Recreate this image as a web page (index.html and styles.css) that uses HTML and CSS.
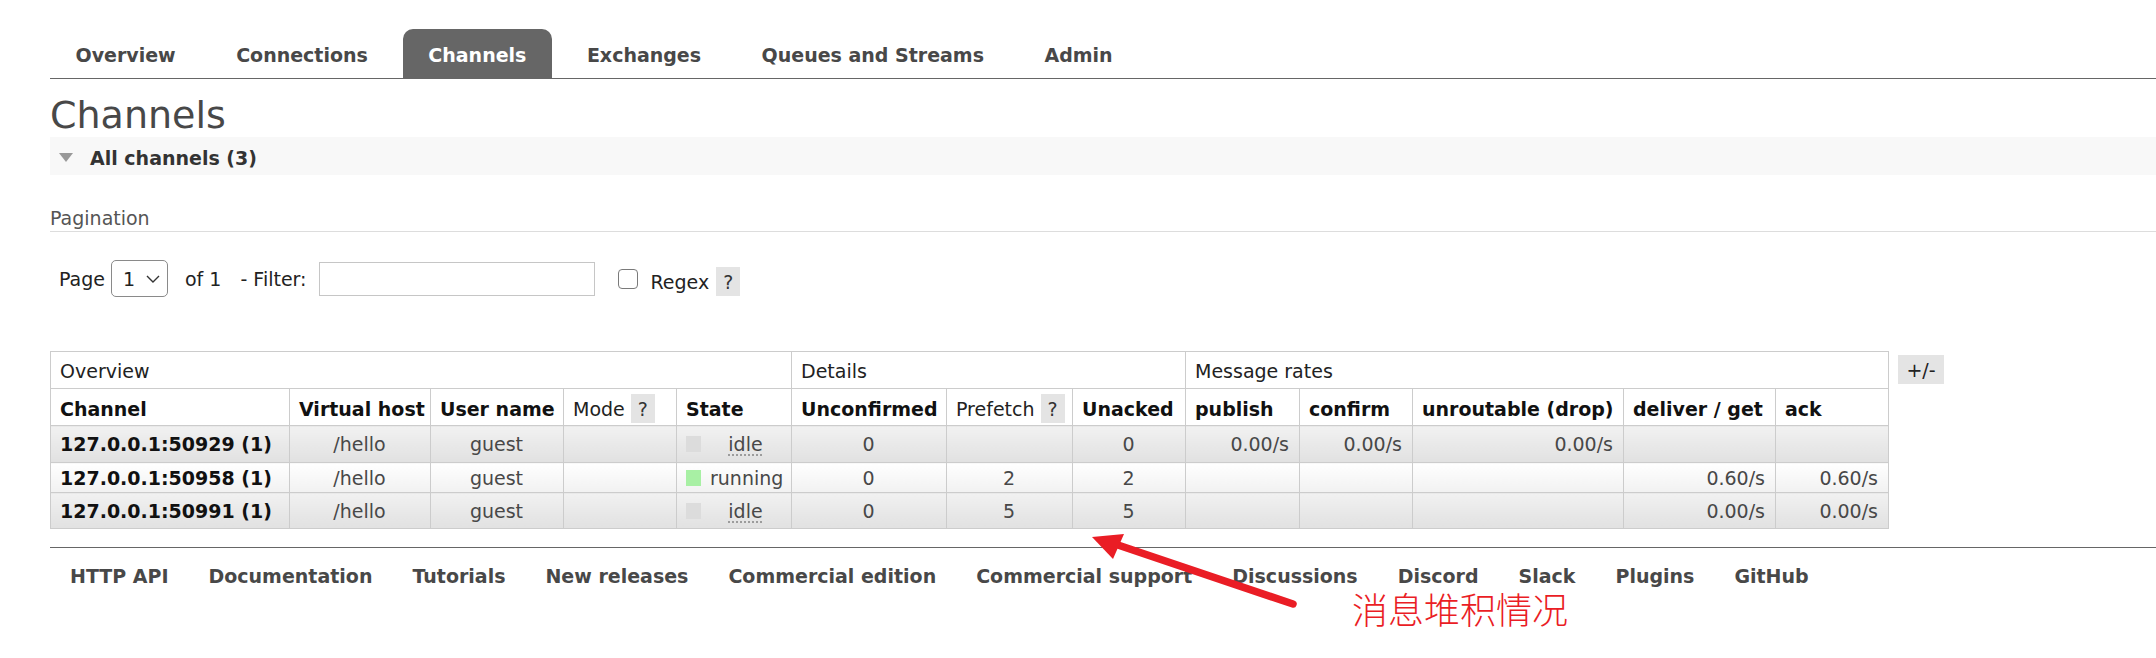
FILE: index.html
```html
<!DOCTYPE html>
<html lang="en">
<head>
<meta charset="utf-8">
<title>Channels</title>
<link rel="stylesheet" href="styles.css">
</head>
<body>
<div class="page">
  <ul class="tabs">
    <li><a href="#">Overview</a></li>
    <li><a href="#">Connections</a></li>
    <li class="active"><a href="#">Channels</a></li>
    <li><a href="#">Exchanges</a></li>
    <li><a href="#">Queues and Streams</a></li>
    <li><a href="#">Admin</a></li>
  </ul>

  <main class="main">
    <h1 class="title">Channels</h1>
    <div class="section-head"><span class="tri"></span><span>All channels (3)</span></div>

    <h3 class="pag-title">Pagination</h3>
    <div class="filter-row">
      <span>Page</span>
      <span class="select"><span class="select-val">1</span><svg class="chev" width="14" height="8" viewBox="0 0 14 8"><polyline points="1,1 7,7 13,1" fill="none" stroke="#333" stroke-width="1.4"/></svg></span>
      <span class="of">of 1</span>
      <span class="flabel">- Filter:</span>
      <span class="input"></span>
      <span class="check"></span>
      <span class="regex">Regex</span>
      <span class="help help-low">?</span>
    </div>

    <div class="table-wrap">
      <table class="list">
        <colgroup>
          <col class="w239"><col class="w141"><col class="w133"><col class="w113"><col class="w115">
          <col class="w155"><col class="w126"><col class="w113">
          <col class="w114"><col class="w113"><col class="w211"><col class="w152"><col class="w113">
        </colgroup>
        <thead>
          <tr class="group">
            <th colspan="5">Overview</th>
            <th colspan="3">Details</th>
            <th colspan="5">Message rates</th>
          </tr>
          <tr class="heads">
            <th class="b">Channel</th>
            <th class="b">Virtual host</th>
            <th class="b">User name</th>
            <th><span class="hwrap">Mode <span class="help">?</span></span></th>
            <th class="b">State</th>
            <th class="b">Unconfirmed</th>
            <th><span class="hwrap">Prefetch <span class="help">?</span></span></th>
            <th class="b">Unacked</th>
            <th class="b">publish</th>
            <th class="b">confirm</th>
            <th class="b">unroutable (drop)</th>
            <th class="b">deliver / get</th>
            <th class="b">ack</th>
          </tr>
        </thead>
        <tbody>
          <tr class="alt1 r37">
            <td class="name">127.0.0.1:50929 (1)</td>
            <td class="c">/hello</td>
            <td class="c">guest</td>
            <td></td>
            <td><span class="state"><span class="sq grey"></span><abbr class="st">idle</abbr></span></td>
            <td class="c">0</td>
            <td class="c"></td>
            <td class="c">0</td>
            <td class="r">0.00/s</td>
            <td class="r">0.00/s</td>
            <td class="r">0.00/s</td>
            <td class="r"></td>
            <td class="r"></td>
          </tr>
          <tr class="alt2 r30">
            <td class="name">127.0.0.1:50958 (1)</td>
            <td class="c">/hello</td>
            <td class="c">guest</td>
            <td></td>
            <td><span class="state"><span class="sq green"></span><span class="st">running</span></span></td>
            <td class="c">0</td>
            <td class="c">2</td>
            <td class="c">2</td>
            <td class="r"></td>
            <td class="r"></td>
            <td class="r"></td>
            <td class="r">0.60/s</td>
            <td class="r">0.60/s</td>
          </tr>
          <tr class="alt1 r36">
            <td class="name">127.0.0.1:50991 (1)</td>
            <td class="c">/hello</td>
            <td class="c">guest</td>
            <td></td>
            <td><span class="state"><span class="sq grey"></span><abbr class="st">idle</abbr></span></td>
            <td class="c">0</td>
            <td class="c">5</td>
            <td class="c">5</td>
            <td class="r"></td>
            <td class="r"></td>
            <td class="r"></td>
            <td class="r">0.00/s</td>
            <td class="r">0.00/s</td>
          </tr>
        </tbody>
      </table>
      <span class="help plusminus">+/-</span>
    </div>
  </main>

  <footer class="footer">
    <ul class="foot-links">
      <li><a href="#">HTTP API</a></li>
      <li><a href="#">Documentation</a></li>
      <li><a href="#">Tutorials</a></li>
      <li><a href="#">New releases</a></li>
      <li><a href="#">Commercial edition</a></li>
      <li><a href="#">Commercial support</a></li>
      <li><a href="#">Discussions</a></li>
      <li><a href="#">Discord</a></li>
      <li><a href="#">Slack</a></li>
      <li><a href="#">Plugins</a></li>
      <li><a href="#">GitHub</a></li>
    </ul>
  </footer>
</div>

<svg class="arrow" width="2156" height="658" viewBox="0 0 2156 658">
  <line x1="1293" y1="604" x2="1112" y2="543" stroke="#ea1d25" stroke-width="7.5" stroke-linecap="round"/>
  <polygon points="1092,537 1124,534 1113,559" fill="#ea1d25"/>
</svg>
<div class="note">消息堆积情况</div>
</body>
</html>
```

FILE: styles.css
```css
* { box-sizing: border-box; }
html, body { margin: 0; padding: 0; background: #fff; }
body {
  font-family: "DejaVu Sans", Verdana, sans-serif;
  font-size: 19px;
  color: #484848;
  position: relative;
  min-height: 658px;
  overflow: hidden;
}
.page { padding: 29px 0 0 50px; }

/* tabs */
.tabs {
  display: flex;
  list-style: none;
  margin: 0;
  padding: 0;
  border-bottom: 1px solid #666;
}
.tabs li { margin-right: 9.5px; }
.tabs a {
  display: block;
  height: 49px;
  padding: 4px 25.5px 0;
  line-height: 45px;
  font-weight: bold;
  color: #484848;
  text-decoration: none;
  border-radius: 10px 10px 0 0;
}
.tabs li.active a { background: #666; color: #fff; }

/* title */
.title {
  margin: 14px 0 0;
  font-size: 38px;
  font-weight: normal;
  line-height: 44px;
  color: #484848;
}

.section-head {
  display: flex;
  align-items: center;
  height: 38px;
  padding: 4px 0 0 9px;
  line-height: 30px;
  background: #f8f8f8;
  font-weight: bold;
  color: #333;
}
.tri {
  width: 0; height: 0;
  border-left: 7px solid transparent;
  border-right: 7px solid transparent;
  border-top: 9px solid #999;
  margin: -1px 17px 0 0;
}

.pag-title {
  margin: 32px 0 0;
  font-size: 19px;
  font-weight: normal;
  line-height: 22px;
  padding-bottom: 2px;
  border-bottom: 1px solid #ddd;
  color: #555;
}

.filter-row {
  display: flex;
  align-items: center;
  height: 37px;
  margin-top: 28px;
  padding-left: 9px;
  color: #222;
}
.select {
  display: flex;
  align-items: center;
  justify-content: space-between;
  width: 57px;
  height: 37px;
  margin-left: 6px;
  padding: 0 7px 0 11px;
  border: 1px solid #8a8a8a;
  border-radius: 5px;
}
.chev { display: block; }
.of { margin-left: 17px; }
.flabel { margin-left: 19px; }
.input {
  width: 276px;
  height: 34px;
  margin-left: 13px;
  border: 1px solid #c6c6c6;
}
.check {
  width: 20px;
  height: 20px;
  margin-left: 23px;
  border: 1.5px solid #7a7a7a;
  border-radius: 4px;
}
.regex { margin: 6px 0 0 12px; }
.help {
  display: inline-flex;
  align-items: center;
  justify-content: center;
  width: 24px;
  height: 29px;
  background: #e4e4e4;
  color: #333;
  font-weight: normal;
}
.help-low { margin: 6px 0 0 7px; }

/* table */
.table-wrap {
  display: flex;
  align-items: flex-start;
  gap: 9px;
  margin-top: 54px;
}
.list {
  border-collapse: collapse;
  table-layout: fixed;
  width: 1839px;
}
.w239 { width: 239px; } .w141 { width: 141px; } .w133 { width: 133px; }
.w113 { width: 113px; } .w115 { width: 115px; } .w155 { width: 155px; }
.w126 { width: 126px; } .w114 { width: 114px; } .w211 { width: 211px; }
.w152 { width: 152px; }
.list th, .list td {
  border: 1px solid #ccc;
  padding: 0 10px 0 9px;
  line-height: 22px;
  vertical-align: middle;
  white-space: nowrap;
  overflow: hidden;
}
.list th { text-align: left; font-weight: normal; color: #222; background: #fff; }
.list th.b { font-weight: bold; color: #111; }
.list tr.group { height: 37px; }
.list tr.group th { padding-top: 2px; }
.list tr.heads { height: 37px; }
.list tr.heads th { padding-top: 3px; }
.list tr.r37 { height: 37px; }
.list tr.r30 { height: 30px; }
.list tr.r36 { height: 36px; }
.list tr.alt1 td { background: linear-gradient(#f1f1f1, #e1e1e1); }
.list tr.alt2 td { background: linear-gradient(#ffffff, #f1f1f1); }
.list td { color: #484848; }
.list td.name { font-weight: bold; color: #111; }
.list td.c { text-align: center; }
.list td.r { text-align: right; }
.hwrap { display: inline-flex; align-items: center; gap: 6px; }

.state { display: flex; align-items: center; }
.sq { width: 15px; height: 16px; flex: none; }
.sq.grey { background: #dcdcdc; }
.sq.green { background: #a8f0a4; }
.st { flex: 1; min-width: 0; padding-left: 9px; text-align: center; }
abbr.st { text-decoration: underline dotted #999; text-underline-offset: 4px; }

.plusminus { width: 46px; margin-top: 4px; color: #222; }

/* footer */
.footer {
  margin-top: 18px;
  border-top: 1px solid #666;
}
.foot-links {
  display: flex;
  gap: 40px;
  list-style: none;
  margin: 0;
  padding: 17px 0 0 20px;
  line-height: 22px;
}
.foot-links a { color: #484848; font-weight: bold; text-decoration: none; }

/* annotation overlay */
.arrow { position: absolute; left: 0; top: 0; pointer-events: none; }
.note {
  position: absolute;
  left: 1352px;
  top: 590px;
  font-family: "Noto Sans CJK SC", sans-serif;
  font-size: 36px;
  font-weight: 300;
  line-height: 36px;
  color: #ea1d25;
}
```
